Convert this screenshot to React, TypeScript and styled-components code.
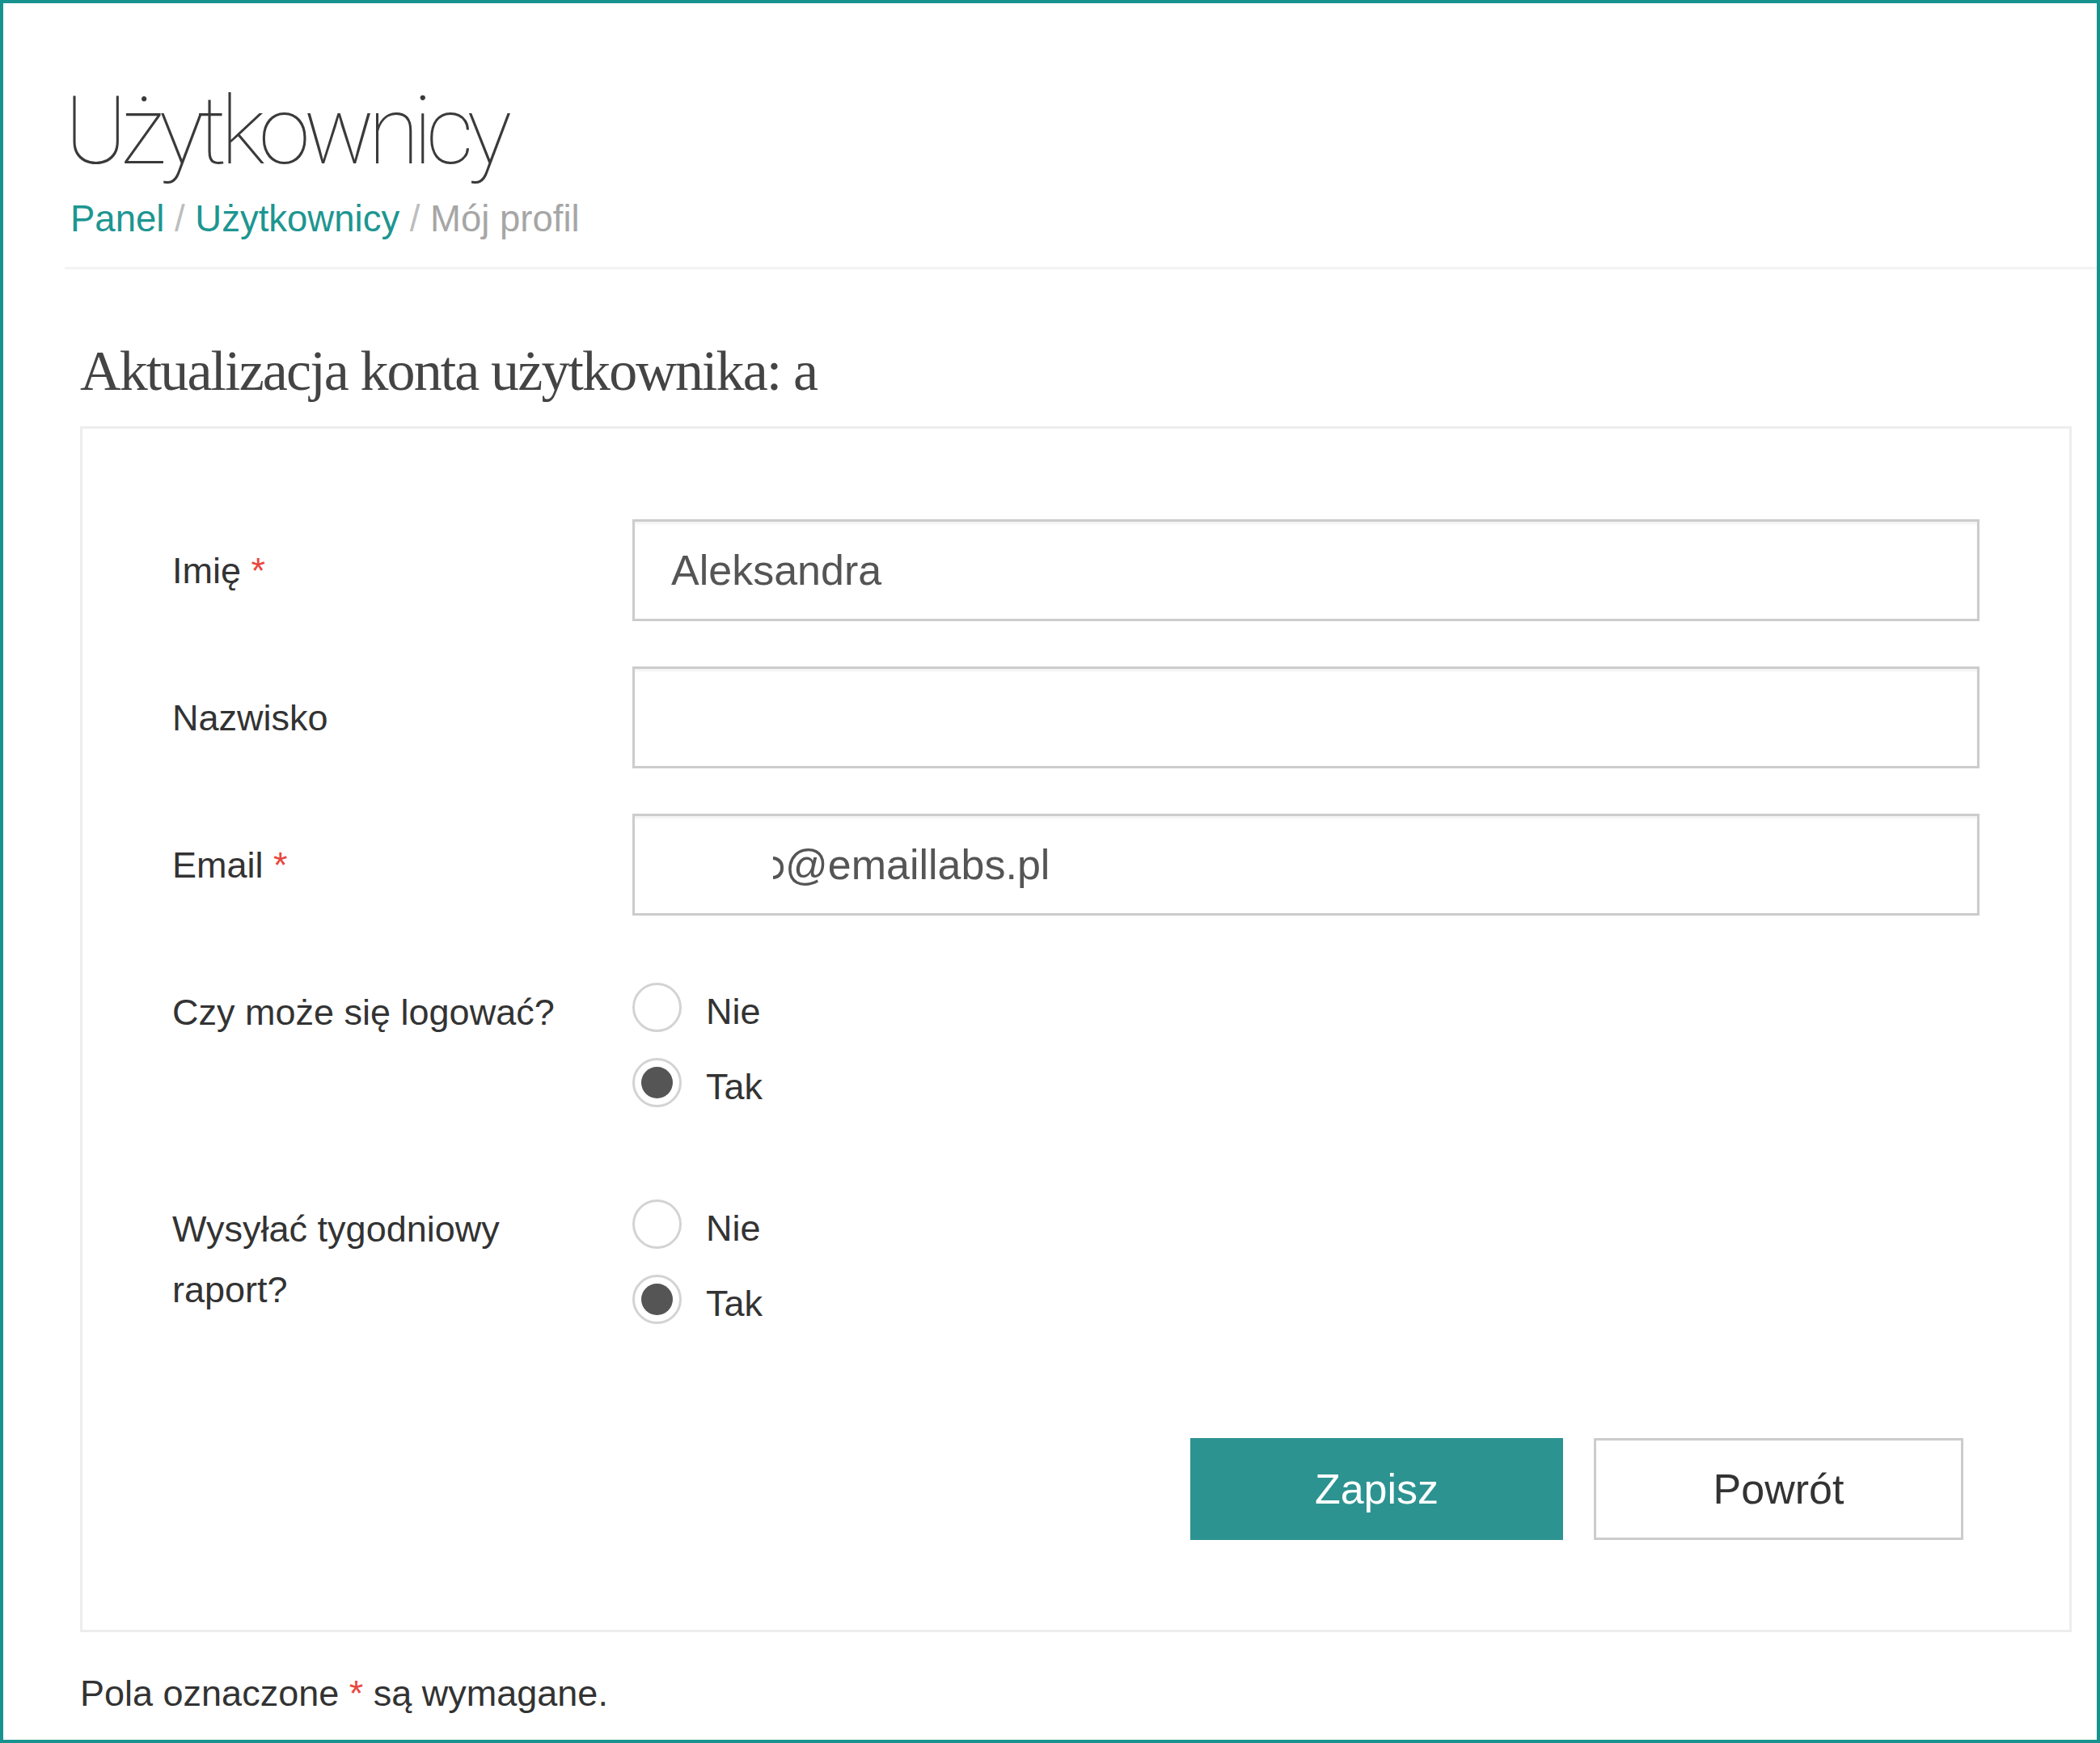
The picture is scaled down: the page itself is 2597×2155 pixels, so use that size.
import React from 'react'
import styled, { createGlobalStyle, css } from 'styled-components'

const GlobalStyle = createGlobalStyle`
    html, body {
        margin: 0;
        padding: 0;
        background: #fff;
    }
    body {
        font-family: "Liberation Sans", Arial, Helvetica, sans-serif;
        color: #333;
    }
`

export const Frame = styled.div`
    box-sizing: border-box;
    min-height: 100vh;
    border: 4px solid #17938f;
    padding-left: 76px;
`
export const Header = styled.header`
    padding-bottom: 32px;
    border-bottom: 3px solid #f3f3f3;
`
export const Title = styled.h1`
    margin: 100px 0 0;
    font-family: Roboto, "Liberation Sans", sans-serif;
    font-weight: 100;
    font-size: 116px;
    line-height: 1;
    color: #3a3a3a;
    letter-spacing: -8px;
`
export const Breadcrumb = styled.nav`
    margin-top: 24px;
    padding-left: 7px;
    font-size: 45.5px;
    line-height: 54px;
    color: #a6a6a6;
`
export const Crumb = styled.a`
    color: #1d9691;
    text-decoration: none;
`
export const Slash = styled.span`
    color: #bdbdbd;
`
export const Main = styled.main`
    padding: 0 31px 0 19px;
`
export const Heading = styled.h2`
    margin: 84px 0 26px;
    font-family: "Liberation Serif", "Times New Roman", serif;
    font-weight: normal;
    font-size: 70px;
    line-height: 1.2;
    letter-spacing: -1.9px;
    color: #444;
`
export const Card = styled.section`
    border: 3px solid #ededed;
    padding: 112px 111px 111px;
`
interface IRowProps {
    $radio?: boolean
}
export const Row = styled.div<IRowProps>`
    display: grid;
    grid-template-columns: 569px 1fr;
    align-items: center;
    margin-bottom: 56px;
    ${(props) => props.$radio && css`
        align-items: start;
        padding: 26px 0 31px;
    `}
`
export const Label = styled.label`
    padding-right: 60px;
    font-size: 45px;
    line-height: 75px;
    color: #333;
`
export const Required = styled.span`
    color: #e8473f;
`
const fieldCss = css`
    box-sizing: border-box;
    display: flex;
    align-items: center;
    width: 100%;
    height: 126px;
    margin: 0;
    padding: 0 45px;
    border: 3px solid #ccc;
    border-radius: 0;
    box-shadow: inset 0 3px 3px rgba(0, 0, 0, 0.05);
    background: #fff;
    font-family: "Liberation Sans", Arial, sans-serif;
    font-size: 52px;
    color: #555;
    outline: none;
`
export const Input = styled.input`
    ${fieldCss}
`
export const FieldBox = styled.div`
    ${fieldCss}
    white-space: nowrap;
`
// what is left of the hidden part of the address: the right half of an "o"
export const MaskEdge = styled.span`
    box-sizing: border-box;
    display: inline-block;
    flex: none;
    width: 13px;
    height: 28px;
    margin: 8px 2px 0 126px;
    border: 4px solid #555;
    border-left: none;
    border-radius: 0 14px 14px 0;
`
export const RadioGroup = styled.div`
    display: flex;
    flex-direction: column;
    gap: 31px;
`
export const RadioOption = styled.label`
    display: flex;
    align-items: center;
    gap: 30px;
    height: 62px;
    font-size: 45px;
    color: #333;
`
interface IRadioMarkProps {
    $checked?: boolean
}
export const RadioMark = styled.span<IRadioMarkProps>`
    box-sizing: border-box;
    display: grid;
    place-items: center;
    flex: none;
    width: 61px;
    height: 61px;
    border: 3px solid #d3d3d3;
    border-radius: 50%;
    background: #fff;
    &::after {
        content: "";
        width: 39px;
        height: 39px;
        border-radius: 50%;
        background: ${(props) => (props.$checked ? '#555' : 'transparent')};
    }
`
export const OptionText = styled.span`
    padding-top: 12px;
`
export const Actions = styled.div`
    display: flex;
    justify-content: flex-end;
    gap: 38px;
    margin-top: 110px;
    padding-right: 20px;
`
interface IButtonProps {
    variant?: 'primary' | 'default'
}
export const Button = styled.button<IButtonProps>`
    box-sizing: border-box;
    height: 126px;
    border-radius: 0;
    font-family: "Liberation Sans", Arial, sans-serif;
    font-size: 52px;
    cursor: pointer;
    ${(props) => {
        if (props.variant === 'primary') {
            return css`
            width: 461px;
            border: none;
            background: #2c9391;
            color: #fff;
          `
        }
        return css`
            width: 457px;
            border: 3px solid #ccc;
            background: #fff;
            color: #333;
          `
    }};
`
export const Note = styled.p`
    margin: 42px 0 0;
    font-size: 45px;
    line-height: 67px;
    color: #333;
`

interface IRadioFieldProps {
    label: string
    value: boolean
}
const RadioField = ({ label, value }: IRadioFieldProps) => (
    <Row $radio>
        <Label>{label}</Label>
        <RadioGroup>
            <RadioOption>
                <RadioMark $checked={!value} />
                <OptionText>Nie</OptionText>
            </RadioOption>
            <RadioOption>
                <RadioMark $checked={value} />
                <OptionText>Tak</OptionText>
            </RadioOption>
        </RadioGroup>
    </Row>
)

export default function App() {
    return (
        <>
            <GlobalStyle />
            <Frame>
                <Header>
                    <Title>Użytkownicy</Title>
                    <Breadcrumb>
                        <Crumb href="#">Panel</Crumb>
                        <Slash> / </Slash>
                        <Crumb href="#">Użytkownicy</Crumb>
                        <Slash> / </Slash>
                        Mój profil
                    </Breadcrumb>
                </Header>
                <Main>
                    <Heading>Aktualizacja konta użytkownika: a</Heading>
                    <Card>
                        <Row>
                            <Label>Imię <Required>*</Required></Label>
                            <Input defaultValue="Aleksandra" />
                        </Row>
                        <Row>
                            <Label>Nazwisko</Label>
                            <Input defaultValue="" />
                        </Row>
                        <Row>
                            <Label>Email <Required>*</Required></Label>
                            <FieldBox>
                                <MaskEdge />@emaillabs.pl
                            </FieldBox>
                        </Row>
                        <RadioField label="Czy może się logować?" value={true} />
                        <RadioField label="Wysyłać tygodniowy raport?" value={true} />
                        <Actions>
                            <Button variant="primary">Zapisz</Button>
                            <Button>Powrót</Button>
                        </Actions>
                    </Card>
                    <Note>Pola oznaczone <Required>*</Required> są wymagane.</Note>
                </Main>
            </Frame>
        </>
    )
}
